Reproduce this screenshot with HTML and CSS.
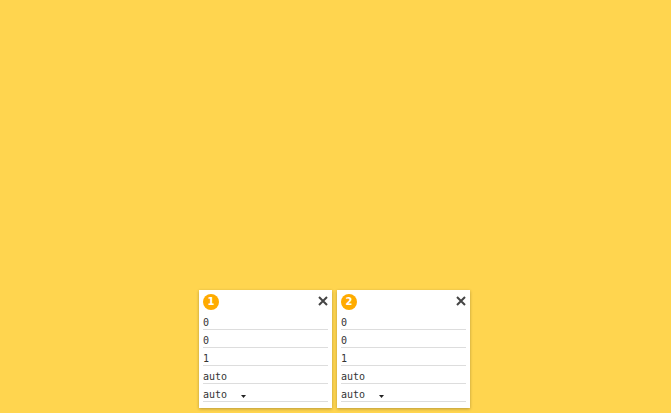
FILE: index.html
```html
<!DOCTYPE html>
<html>
<head>
<meta charset="utf-8">
<link rel="stylesheet" href="styles.css">
</head>
<body>
<div class="stage">
  <div class="card">
    <div class="card-head">
      <span class="badge">1</span>
      <svg class="close" width="10" height="10" viewBox="0 0 10 10"><path d="M1 1L9 9M9 1L1 9" stroke="#444" stroke-width="2" fill="none"/></svg>
    </div>
    <div class="row">0</div>
    <div class="row">0</div>
    <div class="row">1</div>
    <div class="row">auto</div>
    <div class="row"><span class="select">auto<svg class="caret" width="5" height="3" viewBox="0 0 5 3"><path d="M0 0H5L2.5 3Z" fill="#222"/></svg></span></div>
  </div>
  <div class="card">
    <div class="card-head">
      <span class="badge">2</span>
      <svg class="close" width="10" height="10" viewBox="0 0 10 10"><path d="M1 1L9 9M9 1L1 9" stroke="#444" stroke-width="2" fill="none"/></svg>
    </div>
    <div class="row">0</div>
    <div class="row">0</div>
    <div class="row">1</div>
    <div class="row">auto</div>
    <div class="row"><span class="select">auto<svg class="caret" width="5" height="3" viewBox="0 0 5 3"><path d="M0 0H5L2.5 3Z" fill="#222"/></svg></span></div>
  </div>
</div>
</body>
</html>
```
FILE: styles.css
```css
html, body {
  margin: 0;
  padding: 0;
  height: 100%;
}
body {
  background: #FFD54F;
  font-family: "DejaVu Sans Mono", monospace;
}
.stage {
  height: 100%;
  box-sizing: border-box;
  display: flex;
  justify-content: center;
  align-items: flex-end;
  gap: 5px;
  padding: 0 2px 5px 0;
}
.card {
  width: 133px;
  box-sizing: border-box;
  background: #fff;
  padding: 4px 4px 6px 4px;
  box-shadow: 0 1px 3px rgba(0,0,0,0.28);
}
.card-head {
  height: 16px;
  display: flex;
  align-items: center;
  justify-content: space-between;
  margin-bottom: 2px;
}
.badge {
  width: 16px;
  height: 16px;
  border-radius: 50%;
  background: #FFAB00;
  color: #fff;
  font-family: "DejaVu Sans", sans-serif;
  font-weight: bold;
  font-size: 10px;
  line-height: 16px;
  text-align: center;
}
.close {
  margin-right: 0;
  margin-top: -2px;
}
.row {
  height: 17px;
  width: 125px;
  border-bottom: 1px solid #ddd;
  display: flex;
  align-items: flex-end;
  font-size: 10px;
  line-height: 12px;
  color: #333;
}
.select {
  display: flex;
  align-items: center;
  width: 43px;
  justify-content: space-between;
}
.caret {
  margin-top: 3px;
}
```
